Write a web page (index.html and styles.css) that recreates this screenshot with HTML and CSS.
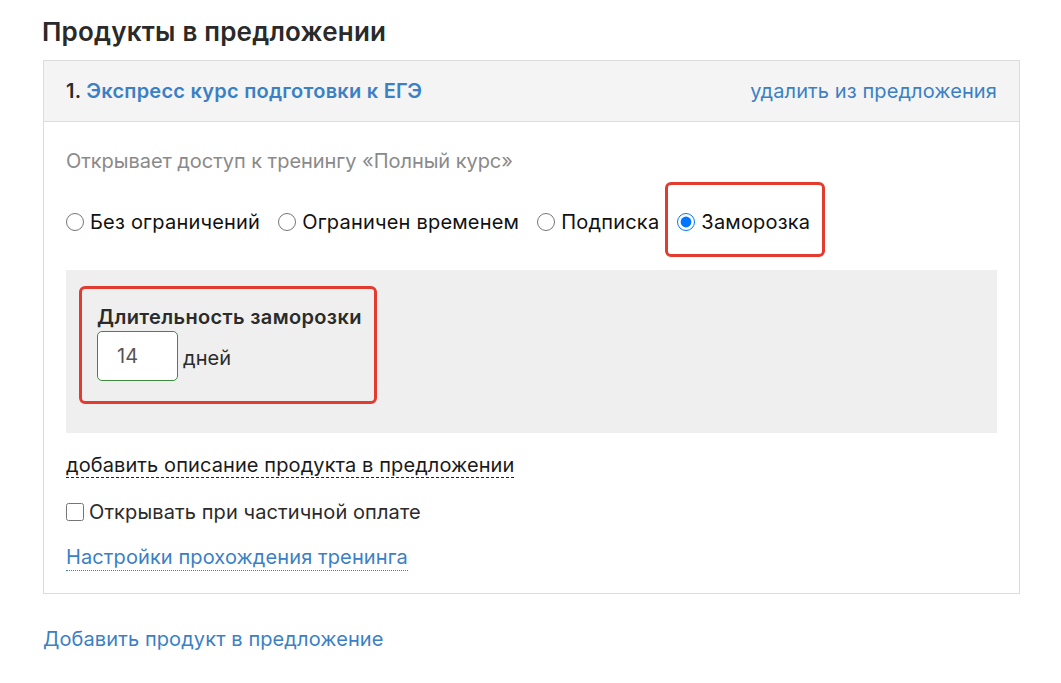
FILE: index.html
```html
<!DOCTYPE html>
<html lang="ru">
<head>
  <meta charset="UTF-8">
  <meta name="viewport" content="width=device-width, initial-scale=1">
  <title>Продукты в предложении</title>
  <link rel="stylesheet" href="styles.css">
</head>
<body>

<div class="page">

  <h1 class="section-title">Продукты в предложении</h1>

  <div class="product">
    <div class="product-head">
      <div class="product-name">1. <a href="#">Экспресс курс подготовки к ЕГЭ</a></div>
      <a href="#" class="remove-link">удалить из предложения</a>
    </div>

    <div class="product-body">
      <div class="product-desc">Открывает доступ к тренингу «Полный курс»</div>

      <div class="access-types">
        <label class="access-option"><input type="radio" name="access">Без ограничений</label>
        <label class="access-option"><input type="radio" name="access">Ограничен временем</label>
        <label class="access-option"><input type="radio" name="access">Подписка</label>
        <label class="access-option marked"><input type="radio" name="access" checked>Заморозка</label>
      </div>

      <div class="freeze-settings">
        <div class="freeze-field">
          <div class="field-label">Длительность заморозки</div>
          <div class="field-row">
            <input type="text" class="days-input" value="14">
            <span>дней</span>
          </div>
        </div>
      </div>

      <div class="desc-toggle">
        <span>добавить описание продукта в предложении</span>
      </div>

      <label class="partial-pay"><input type="checkbox">Открывать при частичной оплате</label>

      <div class="training-settings">
        <a href="#">Настройки прохождения тренинга</a>
      </div>
    </div>
  </div>

  <div class="add-product">
    <a href="#">Добавить продукт в предложение</a>
  </div>

</div>

</body>
</html>
```

FILE: styles.css
```css
:root {
  --link: #3b80c4;
  --text: #2b2b2b;
  --muted: #8a8a8a;
  --border: #dcdcdc;
  --mark: #e23b2f;
}

body {
  margin: 0;
  font-family: Inter, "Noto Sans", sans-serif;
  font-size: 20px;
  line-height: 24px;
  letter-spacing: 0.1px;
  color: var(--text);
  background: #fff;
}

a {
  color: var(--link);
  text-decoration: none;
}

.page {
  padding: 0 41px 0 43px;
}

.section-title {
  margin: 16px 0 13px -1px;
  font-size: 26px;
  line-height: 31px;
  font-weight: 600;
  letter-spacing: 0.2px;
  color: #2a2a2a;
}

/* Product card */
.product {
  border: 1px solid var(--border);
}

.product-head {
  display: flex;
  justify-content: space-between;
  align-items: center;
  height: 60px;
  padding: 0 22px;
  background: #f4f4f4;
  border-bottom: 1px solid var(--border);
}

.product-name {
  font-weight: 600;
  letter-spacing: 0.25px;
}

.remove-link {
  letter-spacing: 0.1px;
}

.product-body {
  padding: 27px 22px 22px;
}

.product-desc {
  color: var(--muted);
  letter-spacing: -0.05px;
}

.access-types {
  display: flex;
  align-items: center;
  gap: 18px;
  margin-top: 37px;
  color: #111;
}

.access-option {
  display: flex;
  align-items: center;
  position: relative;
  letter-spacing: 0.2px;
}

.access-option input,
.partial-pay input {
  width: 18px;
  height: 18px;
  margin: 0 6px 0 0;
}

/* red annotation frame */
.access-option.marked::after {
  content: "";
  position: absolute;
  top: -28px;
  bottom: -23px;
  left: -12px;
  right: -15px;
  border: 3px solid var(--mark);
  border-radius: 6px;
}

/* Freeze settings */
.freeze-settings {
  margin-top: 36px;
  padding: 16px 13px 29px;
  background: #efefef;
}

.freeze-field {
  display: inline-block;
  padding: 16px 12px 20px 15px;
  border: 3px solid var(--mark);
  border-radius: 6px;
}

.field-label {
  font-weight: 600;
  letter-spacing: 0.35px;
}

.field-row {
  display: flex;
  align-items: center;
  gap: 5px;
  margin-top: 2px;
}

.days-input {
  box-sizing: border-box;
  width: 81px;
  height: 50px;
  padding: 0 0 0 19px;
  border: 1px solid #3f8a3f;
  border-radius: 5px;
  font-family: inherit;
  font-size: 20px;
  color: #555;
  outline: none;
}

.field-row span {
  margin-top: 3px;
}

.desc-toggle {
  display: flex;
  margin-top: 20px;
}

.desc-toggle span {
  border-bottom: 1px dashed #222;
  color: #1a1a1a;
}

.partial-pay {
  display: flex;
  align-items: center;
  margin-top: 22px;
}

.partial-pay input {
  margin-right: 5px;
}

.training-settings {
  display: flex;
  margin-top: 21px;
}

.training-settings a {
  padding-bottom: 1px;
  border-bottom: 1px dotted var(--link);
}

.add-product {
  margin-top: 33px;
}
```
